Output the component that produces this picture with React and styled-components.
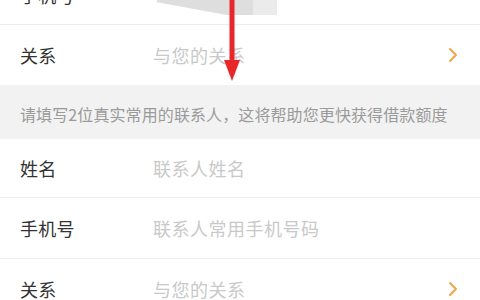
import React from 'react';
import styled, { createGlobalStyle } from 'styled-components';

const GlobalStyle = createGlobalStyle`
  html, body {
    margin: 0;
    padding: 0;
    background: #ffffff;
    font-family: "Noto Sans CJK SC", "Noto Sans", sans-serif;
  }
`;

const Screen = styled.div`
  position: relative;
  width: 480px;
  height: 300px;
  overflow: hidden;
  background: #ffffff;
`;

const List = styled.div`
  display: flex;
  flex-direction: column;
  margin-top: -35px;
`;

const Row = styled.div`
  display: flex;
  align-items: center;
  height: ${(p) => p.h || 59}px;
  padding: 0 20px;
  background: #ffffff;
  border-bottom: ${(p) => (p.last ? 'none' : '1px solid #ececec')};
  flex-shrink: 0;
`;

const Label = styled.span`
  width: 133px;
  font-size: 18px;
  color: #333333;
  letter-spacing: 0.3px;
`;

const Placeholder = styled.span`
  flex: 1;
  font-size: 18px;
  color: #c9c9c9;
  letter-spacing: 0.5px;
`;

const Notice = styled.div`
  display: flex;
  align-items: center;
  height: 54px;
  padding: 4px 20px 0;
  box-sizing: border-box;
  background: #f2f2f2;
  font-size: 16px;
  color: #9a9a9a;
  letter-spacing: 0.1px;
  white-space: nowrap;
  flex-shrink: 0;
`;

const Chevron = () => (
  <svg width="10" height="16" viewBox="0 0 10 16" style={{ marginRight: 2 }}>
    <polyline points="2,2 8,8 2,14" fill="none" stroke="#f2a54a" strokeWidth="2" strokeLinecap="round" strokeLinejoin="round" />
  </svg>
);

const Shade = styled.div`
  position: absolute;
  left: 157px;
  top: 0;
  width: 120px;
  height: 15px;
  background: linear-gradient(90deg, #dedede 0%, #dedede 80%, #ebebeb 80%);
  clip-path: polygon(0 0, 100% 0, 100% 100%, 58% 100%, 0 15%);
`;

const Arrow = styled.svg`
  position: absolute;
  left: 222px;
  top: 0;
`;

const FieldRow = ({ label, hint, arrow, h, last }) => (
  <Row h={h} last={last}>
    <Label>{label}</Label>
    <Placeholder>{hint}</Placeholder>
    {arrow && <Chevron />}
  </Row>
);

export default function App() {
  return (
    <>
      <GlobalStyle />
      <Screen>
        <List>
          <FieldRow label="手机号" hint="" />
          <FieldRow label="关系" hint="与您的关系" arrow h={60} last />
          <Notice>请填写2位真实常用的联系人，这将帮助您更快获得借款额度</Notice>
          <FieldRow label="姓名" hint="联系人姓名" h={58} />
          <FieldRow label="手机号" hint="联系人常用手机号码" h={60} />
          <FieldRow label="关系" hint="与您的关系" arrow h={60} last />
        </List>
        <Shade />
        <Arrow width="20" height="82" viewBox="0 0 20 82">
          <rect x="7.5" y="0" width="5" height="64" fill="#e8272b" />
          <polygon points="2,60 18,60 10,81" fill="#e8272b" />
        </Arrow>
      </Screen>
    </>
  );
}
